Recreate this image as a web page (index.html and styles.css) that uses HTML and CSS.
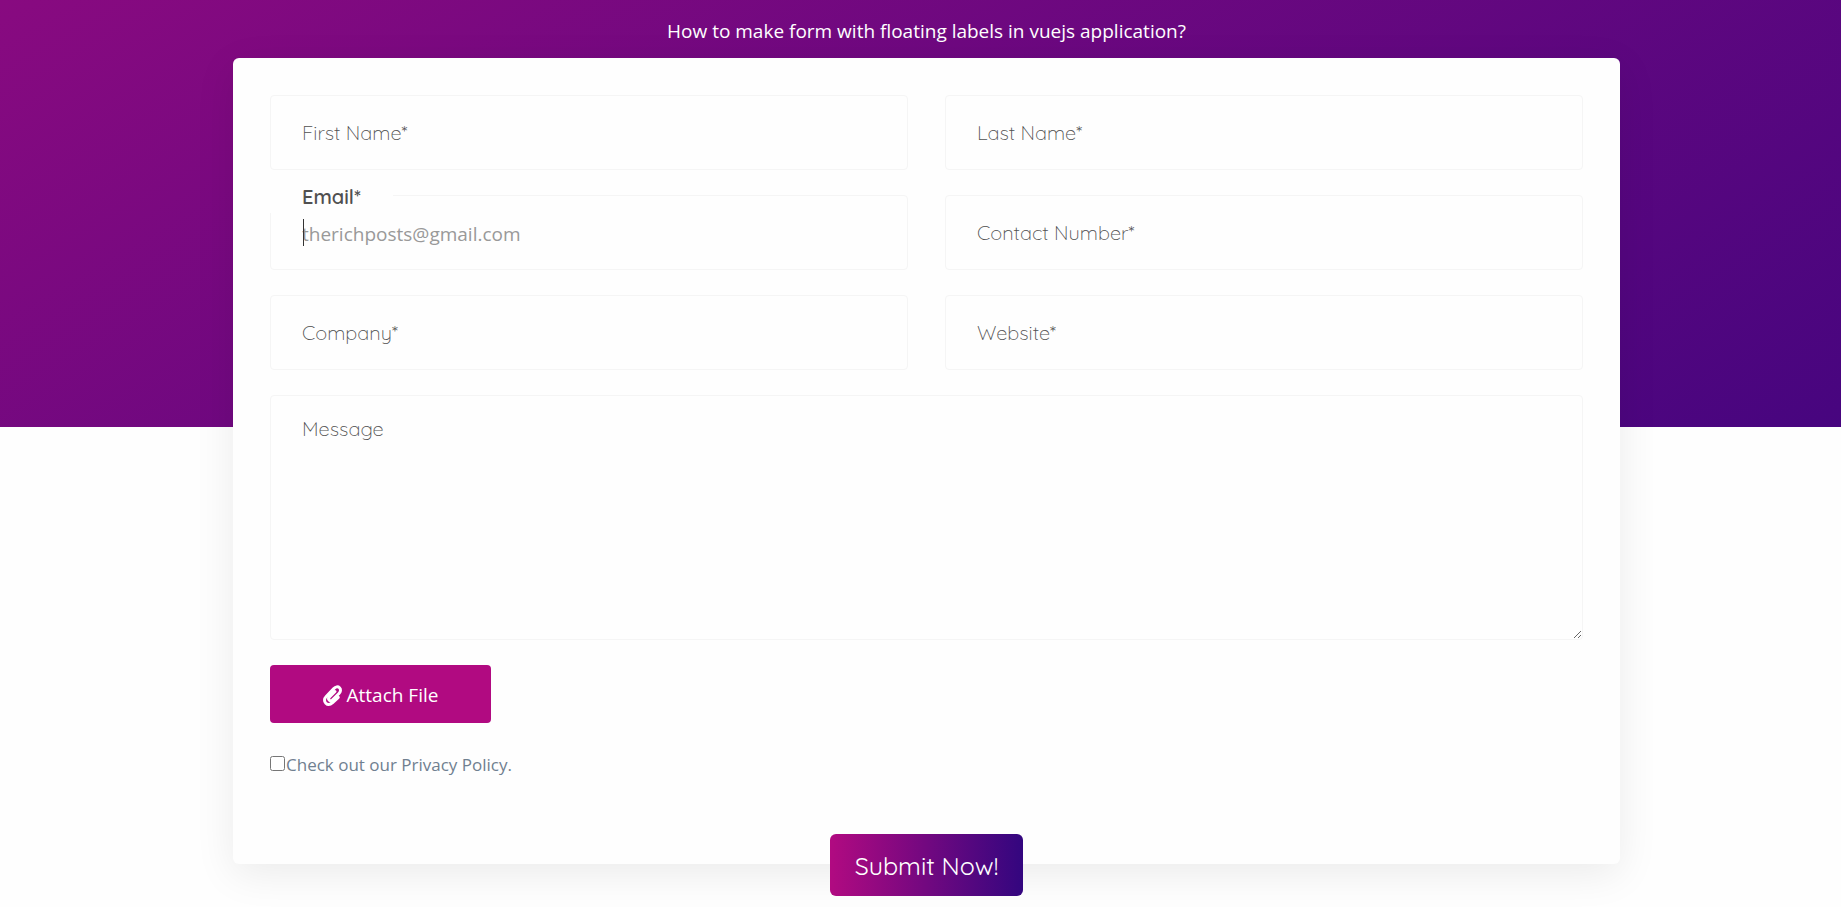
FILE: index.html
```html
<!DOCTYPE html>
<html lang="en">
<head>
<meta charset="utf-8">
<meta name="viewport" content="width=device-width, initial-scale=1">
<title>Floating labels form</title>
<link rel="stylesheet" href="styles.css">
</head>
<body>
<main class="page">
  <h1 class="title">How to make form with floating labels in vuejs application?</h1>
  <form class="card">
    <div class="grid">
      <div class="field"><input class="control" id="first" type="text"><label class="label" for="first">First Name*</label></div>
      <div class="field"><input class="control" id="last" type="text"><label class="label" for="last">Last Name*</label></div>
      <div class="field field-active"><input class="control" id="email" type="email" placeholder="therichposts@gmail.com"><label class="label" for="email">Email*</label></div>
      <div class="field"><input class="control" id="phone" type="tel"><label class="label" for="phone">Contact Number*</label></div>
      <div class="field"><input class="control" id="company" type="text"><label class="label" for="company">Company*</label></div>
      <div class="field"><input class="control" id="website" type="text"><label class="label" for="website">Website*</label></div>
      <div class="field field-wide"><textarea class="control control-area" id="message"></textarea><label class="label label-area" for="message">Message</label></div>
    </div>
    <button class="attach" type="button">
      <svg class="clip" viewBox="0 0 19 21" aria-hidden="true"><path d="M15.300 12.300 9.600 17.600C7.300 19.700 4.600 20 2.800 18.200S1.100 13.600 3.200 11.500L10.800 3.600C12.600 1.700 14.900 1.200 16.500 2.800S17.700 6.800 16 8.500L9.600 14.900C8.500 16 7.200 16.200 6.300 15.300S5.500 13 6.500 12L12 6.500"/></svg>
      <span>Attach File</span>
    </button>
    <div class="policy"><input class="check" id="policy" type="checkbox"><label for="policy">Check out our Privacy Policy.</label></div>
    <button class="submit" type="submit">Submit Now!</button>
  </form>
</main>
</body>
</html>
```
FILE: styles.css
```css
* { box-sizing: border-box; }

body {
  min-height: 100vh;
  margin: 0;
  font-family: "Open Sans", sans-serif;
  font-size: 19px;
  color: #505050;
  background: #fefefe linear-gradient(150deg, #880a80, #47057f) no-repeat 0 0 / 100% 427px;
}

.page {
  display: flex;
  flex-direction: column;
  align-items: center;
  padding: 16px 0 43px 12px;
}

.title {
  margin: 0 0 12px;
  font-size: 19px;
  font-weight: 400;
  line-height: 30px;
  color: #fff;
}

.card {
  display: flex;
  flex-direction: column;
  align-items: flex-start;
  width: 76%;
  max-width: 1387px;
  padding: 37px 37px 0;
  border-radius: 6px;
  background: #fefefe;
  box-shadow: 0 10px 40px rgba(0, 0, 0, 0.08);
}

.grid {
  display: grid;
  grid-template-columns: 1fr 1fr;
  gap: 25px 37px;
  width: 100%;
}

.field {
  position: relative;
  display: flex;
}

.field-wide { grid-column: 1 / -1; }

.control {
  width: 100%;
  height: 75px;
  padding: 2px 31px 0;
  border: 1px solid #f5f5f5;
  border-radius: 4px;
  outline: none;
  background: #fefefe;
  font-family: inherit;
  font-size: 19px;
  color: #505050;
}

.control::placeholder { color: #999; opacity: 1; }

.control-area {
  height: 245px;
  resize: both;
}

.label {
  position: absolute;
  top: 22px;
  left: 0;
  padding: 0 32px;
  font-family: Quicksand, Lato, sans-serif;
  font-size: 20px;
  font-weight: 300;
  line-height: 32px;
}

.label-area { top: 18px; }

.field-active .label {
  top: -14px;
  background: #fefefe;
  font-weight: 600;
}

.field-active::after {
  content: "";
  position: absolute;
  top: 24px;
  left: 33px;
  width: 1px;
  height: 27px;
  background: #333;
}

.attach {
  display: flex;
  align-items: center;
  justify-content: center;
  gap: 5px;
  width: 221px;
  height: 58px;
  margin-top: 25px;
  padding: 2px 0 0;
  border: 0;
  border-radius: 4px;
  background: #b10a81;
  font-family: inherit;
  font-size: 19px;
  color: #fff;
}

.clip {
  width: 19px;
  height: 21px;
  fill: none;
  stroke: #fff;
  stroke-width: 3;
  stroke-linecap: round;
  overflow: visible;
}

.policy {
  display: flex;
  align-items: center;
  gap: 1px;
  margin-top: 26px;
  font-size: 17px;
  line-height: 32px;
  color: #708090;
}

.check {
  width: 15px;
  height: 15px;
  margin: 0 0 4px;
}

.submit {
  align-self: center;
  height: 62px;
  margin: 53px 0 -32px;
  padding: 0 25px;
  border: 0;
  border-radius: 6px;
  background: linear-gradient(90deg, #b10a81, #33067f);
  font-family: Quicksand, Lato, sans-serif;
  font-size: 25px;
  color: #fff;
}
```
